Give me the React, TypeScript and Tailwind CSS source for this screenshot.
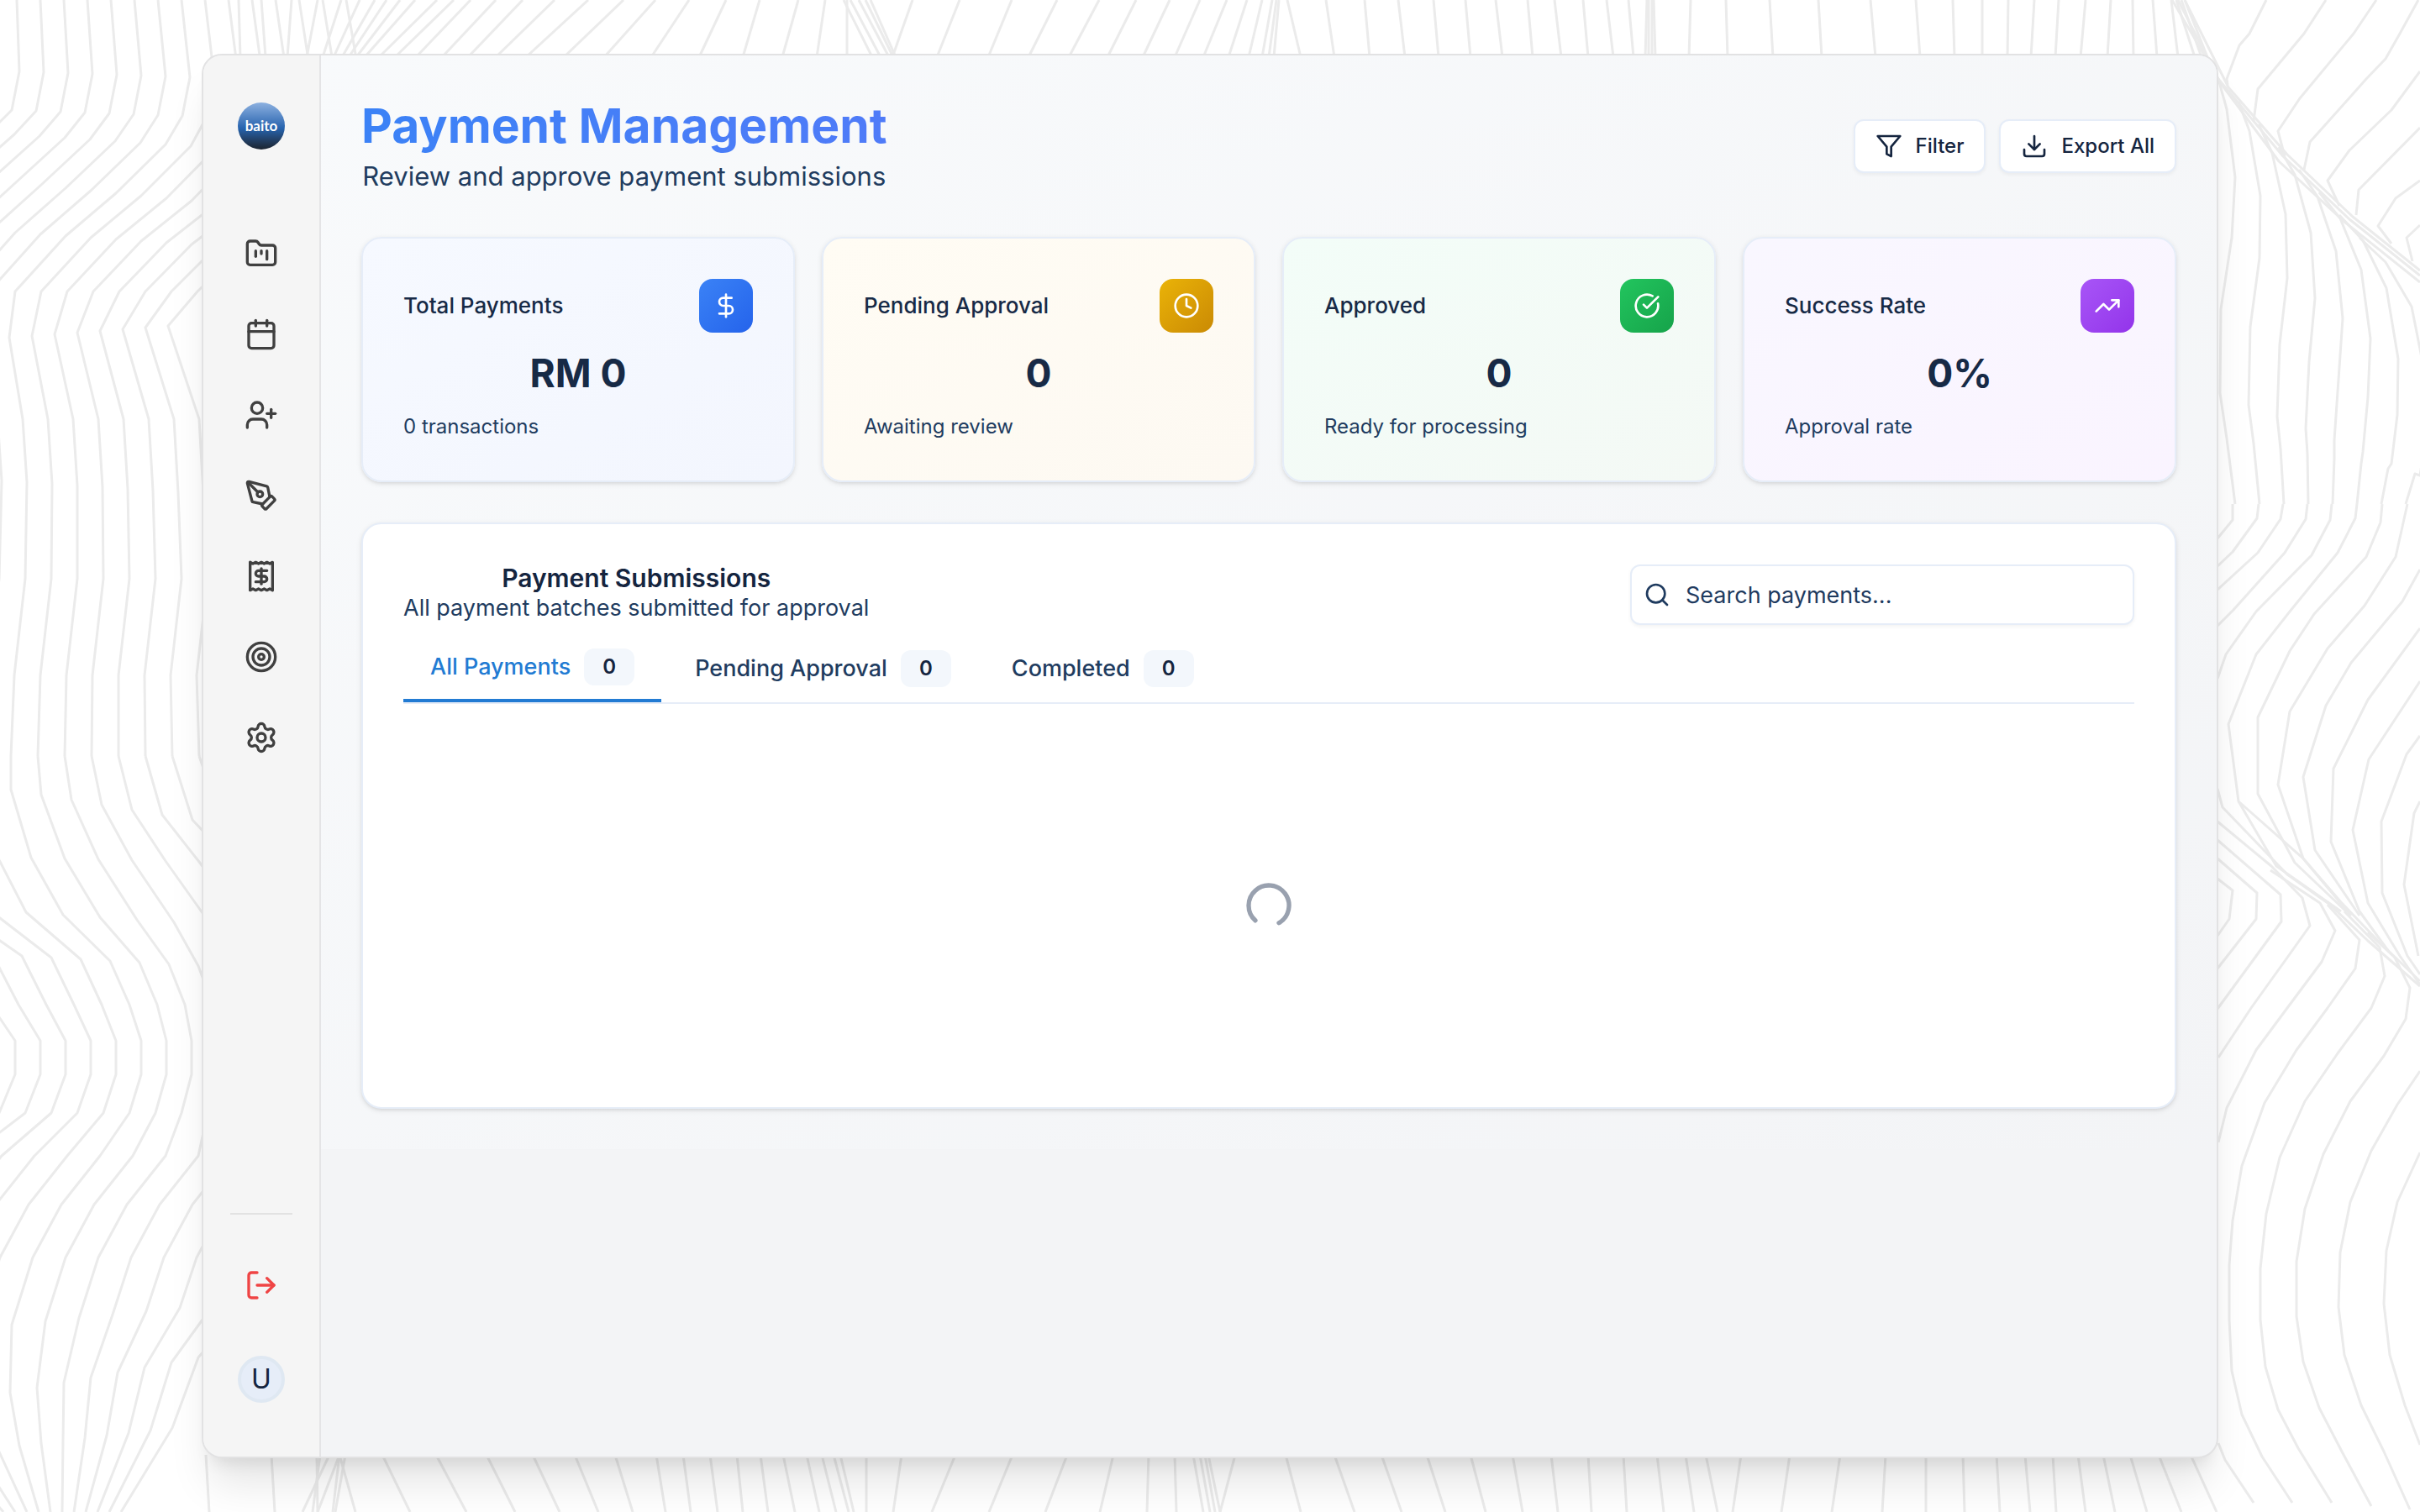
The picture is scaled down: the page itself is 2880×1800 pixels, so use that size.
import React, { useState } from "react";
import {
  Calendar,
  CircleCheckBig,
  Clock,
  DollarSign,
  Download,
  FolderKanban,
  LoaderCircle,
  LogOut,
  PenTool,
  Search,
  Settings,
  Target,
  TrendingUp,
  UserPlus,
} from "lucide-react";

type Point = [number, number];

/* ---------- Contour line background ---------- */

// Offsets a base line along a per-point step to get its neighbours.
function family(base: Point[], step: Point[], from: number, to: number): Point[][] {
  const lines: Point[][] = [];
  for (let k = from; k <= to; k++) {
    lines.push(base.map(([x, y], i) => [x + step[i][0] * k, y + step[i][1] * k] as Point));
  }
  return lines;
}

const leftUpper = family(
  [[13, 900], [17, 804], [30, 689], [32, 574], [27, 499], [11, 402], [18, 347], [78, 281], [138, 230], [197, 172], [217, 138], [226, 92], [216, 0]],
  [[32, 0], [31, 0], [31, 0], [30, 2], [30, 0], [27, -2], [31, 0], [30, 2], [30, 3], [30, 2], [29, 1], [29, 1], [28, 0]],
  -8,
  7,
);

const leftLower = family(
  [[13, 900], [13, 940], [37, 1021], [75, 1089], [131, 1144], [154, 1196], [168, 1239], [168, 1279], [154, 1325], [119, 1376], [73, 1434], [39, 1497], [14, 1577], [12, 1658], [23, 1721], [46, 1800]],
  [[32, 0], [36, 6], [40, 1], [44, 3], [35, 2], [33, 0], [30, 0], [30, 0], [31, 0], [39, 0], [39, 0], [39, 0], [40, -4], [32, -6], [26, -3], [14, 0]],
  -6,
  7,
);

const topStrip: Point[] = [
  [286, 284], [316, 311], [342, 347], [365, 378], [384, 406], [397, 428], [407, 446], [415, 460], [424, 476],
  [434, 494], [451, 520], [470, 540], [495, 560], [526, 590], [557, 622], [590, 660], [626, 700], [671, 742],
  [719, 780], [775, 820], [832, 864], [884, 904], [931, 950], [972, 982], [1008, 1008], [1038, 1004],
  [1048, 1012], [1058, 1022], [1063, 1030], [1066, 1036], [1062, 1086], [1115, 1142], [1176, 1204], [1224, 1258],
  [1272, 1308], [1318, 1352], [1360, 1392], [1398, 1428], [1432, 1460], [1462, 1484], [1486, 1502], [1502, 1514],
  [1510, 1519], [1516, 1522], [1548, 1532], [1588, 1578], [1630, 1624], [1672, 1664], [1712, 1706], [1750, 1744],
  [1788, 1780], [1824, 1818], [1858, 1850], [1890, 1884], [1920, 1912], [1944, 1938], [1958, 1960], [1962, 1962],
  [1966, 1966], [1970, 1968], [2010, 2012], [2056, 2054], [2110, 2106], [2168, 2164], [2232, 2226], [2285, 2280],
  [2326, 2324], [2359, 2359], [2389, 2390], [2417, 2421], [2446, 2450], [2476, 2482], [2508, 2512], [2539, 2538],
  [2567, 2562], [2592, 2584], [2612, 2590], [2620, 2596], [2627, 2600],
];

const bottomStrip: Point[] = [
  [245, 249], [323, 327], [377, 378], [381, 372], [404, 396], [392, 360], [404, 378], [404, 423], [411, 399], [455, 488],
  [519, 555], [579, 613], [634, 666], [684, 712], [732, 753], [781, 792], [813, 822], [845, 854], [877, 884],
  [905, 914], [932, 946], [960, 975], [978, 995], [992, 1010], [1000, 1016], [1031, 1031], [1073, 1063], [1137, 1109],
  [1205, 1177], [1270, 1244], [1325, 1309], [1367, 1365], [1398, 1400], [1420, 1432], [1428, 1440], [1434, 1446],
  [1438, 1452], [1470, 1452], [1530, 1548], [1588, 1612], [1644, 1668], [1698, 1720], [1750, 1768], [1800, 1812],
  [1846, 1854], [1890, 1894], [1932, 1936], [1972, 1980], [2006, 2016], [2030, 2044], [2072, 2062], [2130, 2120],
  [2190, 2180], [2244, 2240], [2292, 2292], [2336, 2338], [2376, 2380], [2410, 2416], [2443, 2447], [2473, 2482],
  [2503, 2517], [2535, 2555], [2569, 2596], [2607, 2638],
];

const rightUpper: Point[][] = [
  [[2697, 0], [2677, 40], [2665, 54], [2650, 94], [2651, 101]],
  [[2768, 0], [2742, 40], [2687, 106], [2682, 144]],
  [[2828, 0], [2801, 40], [2737, 117], [2711, 156], [2719, 186]],
  [[2878, 0], [2856, 40], [2839, 70], [2816, 94], [2749, 169], [2742, 202]],
  [[2880, 85], [2846, 131], [2796, 179], [2770, 215], [2784, 245]],
  [[2880, 152], [2807, 226], [2804, 256]],
  [[2880, 215], [2851, 236], [2830, 269], [2846, 290]],
  [[2880, 268], [2864, 283], [2871, 311]],
  [[2585, 0], [2640, 94], [2717, 186], [2796, 261], [2880, 328]],
  [[2592, 0], [2642, 98], [2712, 192], [2790, 264], [2880, 336]],
  [[2600, 0], [2652, 104], [2722, 184], [2800, 258], [2880, 322]],
  ...family(
    [[2640, 94], [2650, 130], [2660, 211], [2656, 283], [2643, 368], [2642, 468], [2650, 522], [2660, 600]],
    [[24, 27], [27, 26], [30, 22], [33, 24], [35, 21], [34, 14], [32, 6], [29, 0]],
    0,
    7,
  ),
];

const rightMiddle: Point[][] = [
  [[2657, 600], [2657, 619], [2639, 641]],
  [[2688, 600], [2686, 617], [2657, 657], [2639, 674]],
  [[2717, 600], [2714, 618], [2687, 658], [2639, 702]],
  [[2746, 600], [2744, 618], [2719, 658], [2658, 726], [2639, 745]],
  [[2775, 600], [2773, 619], [2751, 661], [2685, 728], [2649, 779], [2639, 808]],
  [[2805, 600], [2803, 617], [2782, 658], [2725, 728], [2685, 779], [2652, 862], [2664, 954], [2709, 1031], [2786, 1085]],
  [[2835, 600], [2833, 622], [2816, 663], [2754, 731], [2725, 775], [2687, 854], [2687, 945], [2731, 1027], [2792, 1085]],
  [[2865, 600], [2851, 663], [2814, 721], [2770, 772], [2725, 847], [2711, 934], [2741, 1022], [2798, 1090]],
  [[2880, 678], [2859, 716], [2798, 789], [2768, 840], [2741, 925], [2755, 1012], [2808, 1090]],
  [[2880, 748], [2818, 833], [2777, 915], [2774, 1002], [2808, 1085], [2843, 1133]],
  [[2880, 811], [2819, 904], [2800, 988], [2818, 1075], [2856, 1138], [2880, 1172]],
  [[2880, 876], [2864, 898], [2834, 978], [2835, 1063], [2865, 1138], [2880, 1160]],
  [[2880, 954], [2873, 968], [2861, 1053], [2878, 1138]],
  [[2639, 939], [2645, 961], [2722, 1041], [2773, 1077], [2818, 1120], [2880, 1174]],
  [[2664, 954], [2741, 1022], [2786, 1074], [2830, 1120], [2880, 1168]],
];

const rightLower: Point[][] = [
  [[2639, 1046], [2657, 1060], [2653, 1094], [2639, 1114]],
  [[2639, 1022], [2686, 1063], [2685, 1094], [2639, 1153]],
  [[2639, 1000], [2714, 1065], [2715, 1097], [2639, 1201]],
  [[2639, 978], [2703, 1031], [2740, 1069], [2749, 1102], [2722, 1140], [2679, 1200], [2640, 1259]],
  [[2702, 1036], [2761, 1075], [2779, 1108], [2763, 1145], [2722, 1200], [2685, 1250], [2650, 1319], [2640, 1360]],
  [[2770, 1077], [2808, 1119], [2803, 1153], [2770, 1200], [2733, 1250], [2695, 1313], [2668, 1388], [2657, 1453], [2653, 1506], [2653, 1571], [2656, 1632], [2668, 1684], [2692, 1734], [2728, 1789]],
  [[2790, 1085], [2832, 1128], [2838, 1162], [2822, 1200], [2782, 1254], [2743, 1311], [2713, 1378], [2697, 1445], [2690, 1510], [2690, 1571], [2696, 1627], [2711, 1678], [2735, 1724], [2775, 1789]],
  [[2818, 1110], [2850, 1140], [2868, 1176], [2863, 1213], [2837, 1257], [2797, 1311], [2765, 1374], [2743, 1439], [2733, 1502], [2733, 1567], [2741, 1621], [2760, 1676], [2787, 1728], [2822, 1793]],
  [[2880, 1275], [2853, 1315], [2822, 1370], [2797, 1431], [2785, 1491], [2783, 1556], [2790, 1613], [2810, 1673], [2837, 1728], [2868, 1797]],
  [[2880, 1372], [2853, 1431], [2840, 1489], [2837, 1552], [2844, 1613], [2862, 1673], [2880, 1720]],
  [[2640, 1718], [2648, 1738], [2682, 1789]],
];

const contours: Point[][] = [
  ...leftUpper,
  ...leftLower,
  ...topStrip.map(([low, high]) => [[high, 0], [low, 68]] as Point[]),
  ...bottomStrip.map(([high, low]) => [[high, 1732], [low, 1800]] as Point[]),
  ...rightUpper,
  ...rightMiddle,
  ...rightLower,
];

function ContourBackground() {
  return (
    <svg
      aria-hidden="true"
      className="absolute inset-0 h-full w-full"
      viewBox="0 0 2880 1800"
      preserveAspectRatio="xMidYMid slice"
      fill="none"
      stroke="#ebebeb"
      strokeWidth="3"
      strokeLinejoin="round"
    >
      {contours.map((line, i) => (
        <polyline key={i} points={line.map((p) => p.join(",")).join(" ")} />
      ))}
    </svg>
  );
}

/* ---------- Sidebar ---------- */

const navItems = [
  { label: "Projects", icon: FolderKanban },
  { label: "Calendar", icon: Calendar },
  { label: "Add user", icon: UserPlus },
  { label: "Design", icon: PenTool },
  { label: "Payments", icon: ReceiptDollar },
  { label: "Targets", icon: Target },
  { label: "Settings", icon: Settings },
];

function ReceiptDollar({ className }: { className?: string }) {
  return (
    <svg
      className={className}
      viewBox="0 0 24 24"
      fill="none"
      stroke="currentColor"
      strokeWidth="2"
      strokeLinecap="round"
      strokeLinejoin="round"
    >
      <path d="M4 2v20l2-1 2 1 2-1 2 1 2-1 2 1 2-1 2 1V2l-2 1-2-1-2 1-2-1-2 1-2-1-2 1Z" />
      <path d="M16 8h-6a2 2 0 1 0 0 4h4a2 2 0 1 1 0 4H8" />
      <path d="M12 17.5v-11" />
    </svg>
  );
}

function Sidebar() {
  return (
    <aside className="flex w-[140px] shrink-0 flex-col items-center border-r-2 border-[#e4e4e6] bg-neutral-100 pt-14 pb-16">
      <a
        href="#home"
        className="flex size-14 items-center justify-center rounded-full bg-linear-to-b from-[#8db1e0] via-[#2563ae] via-55% to-[#1b2430] font-['Lato',sans-serif] text-[17px] font-bold text-white"
      >
        baito
      </a>
      <nav className="mt-24 flex flex-col gap-10">
        {navItems.map(({ label, icon: Icon }) => (
          <a
            key={label}
            href={`#${label.toLowerCase().replace(" ", "-")}`}
            aria-label={label}
            className="flex size-14 items-center justify-center text-neutral-700"
          >
            <Icon className="size-10" />
          </a>
        ))}
      </nav>
      <div className="mt-auto w-full px-8">
        <hr className="border-t-2 border-[#e2e2e2]" />
      </div>
      <button
        type="button"
        aria-label="Log out"
        className="mt-14 flex size-14 items-center justify-center text-[#ef4444]"
      >
        <LogOut className="size-10" />
      </button>
      <button
        type="button"
        className="mt-14 flex size-14 items-center justify-center rounded-full border-4 border-[#dfe8f2] bg-[#e6edf8] text-[32px] leading-none text-[#15253f]"
      >
        U
      </button>
    </aside>
  );
}

/* ---------- Page content ---------- */

function FilterIcon() {
  return (
    <svg
      aria-hidden="true"
      className="size-8"
      viewBox="0 0 24 24"
      fill="none"
      stroke="currentColor"
      strokeWidth="2"
      strokeLinecap="round"
      strokeLinejoin="round"
    >
      <polygon points="22 3 2 3 10 12.46 10 19 14 21 14 12.46 22 3" />
    </svg>
  );
}

function ActionButton({ icon, children }: { icon: React.ReactNode; children: React.ReactNode }) {
  return (
    <button
      type="button"
      className="flex h-16 items-center gap-4 rounded-xl border-2 border-[#e6edf8] bg-white px-6 text-2xl font-medium text-[#15253f] shadow-[0_2px_4px_rgba(0,0,0,0.05)]"
    >
      {icon}
      {children}
    </button>
  );
}

const stats = [
  {
    title: "Total Payments",
    value: "RM 0",
    note: "0 transactions",
    icon: DollarSign,
    card: "from-[#f6f9ff] to-[#f3f6fe]",
    badge: "from-[#3b82f6] to-[#2563eb]",
  },
  {
    title: "Pending Approval",
    value: "0",
    note: "Awaiting review",
    icon: Clock,
    card: "from-[#fffcf4] to-[#fdf9f2]",
    badge: "from-[#eab308] to-[#ca8a04]",
  },
  {
    title: "Approved",
    value: "0",
    note: "Ready for processing",
    icon: CircleCheckBig,
    card: "from-[#f3fdf8] to-[#f4f9f5]",
    badge: "from-[#22c55e] to-[#16a34a]",
  },
  {
    title: "Success Rate",
    value: "0%",
    note: "Approval rate",
    icon: TrendingUp,
    card: "from-[#f9f7ff] to-[#faf4ff]",
    badge: "from-[#a855f7] to-[#9333ea]",
  },
];

function StatCard({ title, value, note, icon: Icon, card, badge }: (typeof stats)[number]) {
  return (
    <article
      className={`flex flex-col gap-4 rounded-3xl border-2 border-[#e6edf8] bg-linear-to-br p-12 shadow-[0_2px_6px_rgba(0,0,0,0.1),0_2px_4px_-2px_rgba(0,0,0,0.1)] ${card}`}
    >
      <div className="flex items-center justify-between">
        <h2 className="text-[26px] leading-8 font-medium text-[#172a46]">{title}</h2>
        <span className={`flex size-16 items-center justify-center rounded-2xl bg-linear-to-br text-white ${badge}`}>
          <Icon className="size-8" />
        </span>
      </div>
      <p className="text-center text-[46px] leading-[64px] font-bold text-[#172a46]">{value}</p>
      <p className="text-2xl leading-8 text-[#213c5f]">{note}</p>
    </article>
  );
}

const tabs = ["All Payments", "Pending Approval", "Completed"];

function Submissions() {
  const [active, setActive] = useState(tabs[0]);
  return (
    <section className="mt-12 flex flex-col rounded-3xl border-2 border-[#e6edf8] bg-white p-12 shadow-[0_2px_6px_rgba(0,0,0,0.1),0_2px_4px_-2px_rgba(0,0,0,0.1)]">
      <div className="flex items-center justify-between">
        <div className="text-center">
          <h2 className="text-3xl leading-8 font-semibold text-[#15253f]">Payment Submissions</h2>
          <p className="text-[27px] leading-10 text-[#213c5f]">All payment batches submitted for approval</p>
        </div>
        <div className="relative w-[600px]">
          <Search aria-hidden="true" className="absolute top-5 left-4 size-8 text-[#1f3b5f]" />
          <input
            type="search"
            aria-label="Search payments"
            placeholder="Search payments..."
            className="h-[72px] w-full rounded-xl border-2 border-[#e6edf8] bg-white pr-4 pl-16 text-[27px] text-[#15253f] shadow-[0_2px_4px_rgba(0,0,0,0.05)] placeholder:text-[#1f3b5f]"
          />
        </div>
      </div>
      <div role="tablist" className="mt-3 flex gap-2 border-b-2 border-[#e6edf8]">
        {tabs.map((tab) => (
          <button
            key={tab}
            type="button"
            role="tab"
            aria-selected={tab === active}
            onClick={() => setActive(tab)}
            className={`flex h-20 items-center gap-4 px-8 text-[27px] font-medium ${
              tab === active ? "border-b-4 border-[#227bd3] text-[#227bd3]" : "text-[#213c5f]"
            }`}
          >
            {tab}
            <span className="flex h-11 w-[60px] items-center justify-center rounded-xl bg-[#f3f7fc] text-2xl font-semibold text-[#15253f]">
              0
            </span>
          </button>
        ))}
      </div>
      <div role="status" aria-label="Loading payments" className="flex h-[432px] items-center justify-center pt-12">
        <LoaderCircle className="size-16 rotate-[132deg] text-gray-400" />
      </div>
    </section>
  );
}

export default function App() {
  return (
    <div className="relative flex min-h-screen bg-white px-60 py-16 font-['Inter',sans-serif]">
      <ContourBackground />
      <div className="relative flex w-full overflow-hidden rounded-3xl border-2 border-[#e2e2e3] bg-gray-100 shadow-[0_40px_50px_-10px_rgba(0,0,0,0.1),0_16px_20px_-12px_rgba(0,0,0,0.1)]">
        <Sidebar />
        <main className="min-w-0 flex-1">
          <div className="bg-linear-to-br from-slate-50 to-gray-100 p-12">
            <header className="flex items-center justify-between">
              <div className="text-center">
                <h1 className="bg-linear-to-r from-[#3b82f6] to-[#4f7bf8] bg-clip-text text-[57px] leading-[72px] font-bold text-transparent">
                  Payment Management
                </h1>
                <p className="text-[31px] leading-[48px] text-[#213c5f]">Review and approve payment submissions</p>
              </div>
              <div className="flex gap-4">
                <ActionButton icon={<FilterIcon />}>Filter</ActionButton>
                <ActionButton icon={<Download aria-hidden="true" className="size-8" />}>Export All</ActionButton>
              </div>
            </header>
            <div className="mt-12 grid grid-cols-4 gap-8">
              {stats.map((stat) => (
                <StatCard key={stat.title} {...stat} />
              ))}
            </div>
            <Submissions />
          </div>
        </main>
      </div>
    </div>
  );
}
